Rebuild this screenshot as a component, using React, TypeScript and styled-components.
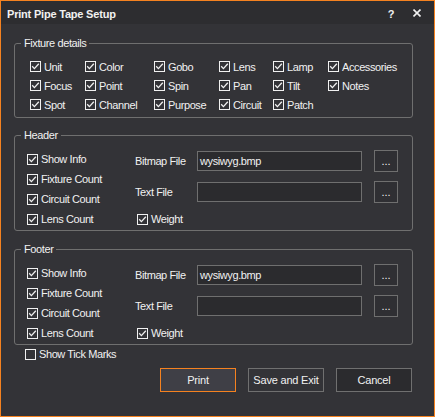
import React from 'react';
import styled, { createGlobalStyle } from 'styled-components';

const GlobalStyle = createGlobalStyle`
  body {
    margin: 0;
    background: #333337;
  }
`;

const Window = styled.div`
  width: 435px;
  height: 417px;
  box-sizing: border-box;
  border: 1px solid #f58220;
  background: #333337;
  display: flex;
  flex-direction: column;
  font-family: "Liberation Sans", Arial, sans-serif;
  font-size: 11px;
  letter-spacing: -0.4px;
  color: #f1f1f1;
`;

const TitleBar = styled.div`
  height: 23px;
  flex: none;
  display: flex;
  align-items: center;
  padding: 0 13px 0 6px;
  background: #2d2d30;
`;

const TitleText = styled.div`
  flex: 1;
  font-size: 11px;
  font-weight: bold;
  letter-spacing: -0.2px;
  padding-top: 2px;
`;

const HelpGlyph = styled.span`
  font-weight: bold;
  font-size: 11px;
  margin-right: 19px;
  padding-top: 2px;
`;

const Body = styled.div`
  flex: 1;
  padding: 19px 21px 0 13px;
  display: flex;
  flex-direction: column;
`;

const Group = styled.div<{ $gap?: number }>`
  position: relative;
  border: 1px solid #6f6f6f;
  border-radius: 3px;
  margin-bottom: ${p => p.$gap ?? 0}px;
`;

const Legend = styled.span`
  position: absolute;
  top: -7px;
  left: 6px;
  padding: 0 3px;
  line-height: 13px;
  background: #333337;
`;

const FixtureGrid = styled.div`
  display: grid;
  grid-template-columns: 55px 69px 65px 54px 55px auto;
  grid-auto-rows: 19px;
  padding: 13px 0 3px 15px;
`;

const Section = styled.div`
  display: flex;
  height: 94px;
  padding-left: 12px;
`;

const LeftCol = styled.div`
  width: 108px;
  padding-top: 13px;
  display: grid;
  grid-auto-rows: 20px;
  align-content: start;
`;

const RightCol = styled.div`
  padding-top: 14px;
  display: grid;
  grid-template-columns: 50px 165px 24px;
  grid-template-rows: 22px 22px 14px;
  column-gap: 12px;
  row-gap: 9px;
  align-content: start;
`;

const FieldLabel = styled.span`
  align-self: center;
  white-space: nowrap;
`;

const FileInput = styled.div`
  align-self: center;
  height: 20px;
  box-sizing: border-box;
  border: 1px solid #6f6f6f;
  background: #2b2b2e;
  padding: 0 2px;
  line-height: 18px;
  white-space: nowrap;
`;

const BrowseButton = styled.button`
  width: 24px;
  height: 22px;
  padding: 0;
  border: 1px solid #6f6f6f;
  background: #2f2f33;
  color: #f1f1f1;
  font: inherit;
  letter-spacing: 0;
`;

const WeightCell = styled.div`
  grid-column: 1 / span 2;
  margin-left: 2px;
  display: flex;
  align-items: center;
`;

const CheckRow = styled.label`
  display: flex;
  align-items: center;
  white-space: nowrap;
`;

const Box = styled.span`
  width: 11px;
  height: 11px;
  box-sizing: border-box;
  border: 1px solid #f1f1f1;
  display: inline-flex;
  align-items: center;
  justify-content: center;
  margin-right: 3px;
  flex: none;
`;

const TickRow = styled.div`
  margin-top: 2px;
  height: 14px;
  padding-left: 11px;
  display: flex;
  align-items: center;
`;

const ButtonRow = styled.div`
  margin-top: 7px;
  display: flex;
  justify-content: flex-end;
  gap: 12px;
  padding-right: 1px;
`;

const DialogButton = styled.button<{ $variant?: 'primary' | 'plain' | 'dark' }>`
  width: 76px;
  height: 24px;
  padding: 0;
  font: inherit;
  letter-spacing: -0.2px;
  color: #f1f1f1;
  border: 1px solid ${p => (p.$variant === 'primary' ? '#f58220' : '#707070')};
  background: ${p =>
    p.$variant === 'primary' ? '#3f3f46' : p.$variant === 'dark' ? '#2b2b2e' : '#333337'};
`;

function Check({ label, checked = true }: { label: string; checked?: boolean }) {
  return (
    <CheckRow>
      <Box>
        {checked && (
          <svg width="9" height="9" viewBox="0 0 9 9">
            <polyline points="1.2,4.3 3.4,6.6 7.8,1.8" fill="none" stroke="#f1f1f1" strokeWidth="1.3" />
          </svg>
        )}
      </Box>
      {label}
    </CheckRow>
  );
}

const fixtureItems = [
  'Unit', 'Color', 'Gobo', 'Lens', 'Lamp', 'Accessories',
  'Focus', 'Point', 'Spin', 'Pan', 'Tilt', 'Notes',
  'Spot', 'Channel', 'Purpose', 'Circuit', 'Patch',
];

function PrintSection({ title, gap }: { title: string; gap?: number }) {
  return (
    <Group $gap={gap}>
      <Legend>{title}</Legend>
      <Section>
        <LeftCol>
          <Check label="Show Info" />
          <Check label="Fixture Count" />
          <Check label="Circuit Count" />
          <Check label="Lens Count" />
        </LeftCol>
        <RightCol>
          <FieldLabel>Bitmap File</FieldLabel>
          <FileInput>wysiwyg.bmp</FileInput>
          <BrowseButton>...</BrowseButton>
          <FieldLabel>Text File</FieldLabel>
          <FileInput />
          <BrowseButton>...</BrowseButton>
          <WeightCell>
            <Check label="Weight" />
          </WeightCell>
        </RightCol>
      </Section>
    </Group>
  );
}

export default function App() {
  return (
    <>
      <GlobalStyle />
      <Window>
        <TitleBar>
          <TitleText>Print Pipe Tape Setup</TitleText>
          <HelpGlyph>?</HelpGlyph>
          <svg width="8" height="8" viewBox="0 0 8 8">
            <path d="M0.5 0.5 L7.5 7.5 M7.5 0.5 L0.5 7.5" stroke="#f1f1f1" strokeWidth="1.6" />
          </svg>
        </TitleBar>
        <Body>
          <Group $gap={17}>
            <Legend>Fixture details</Legend>
            <FixtureGrid>
              {fixtureItems.map(item => (
                <Check key={item} label={item} />
              ))}
            </FixtureGrid>
          </Group>
          <PrintSection title="Header" gap={18} />
          <PrintSection title="Footer" />
          <TickRow>
            <Check label="Show Tick Marks" checked={false} />
          </TickRow>
          <ButtonRow>
            <DialogButton $variant="primary">Print</DialogButton>
            <DialogButton>Save and Exit</DialogButton>
            <DialogButton $variant="dark">Cancel</DialogButton>
          </ButtonRow>
        </Body>
      </Window>
    </>
  );
}
